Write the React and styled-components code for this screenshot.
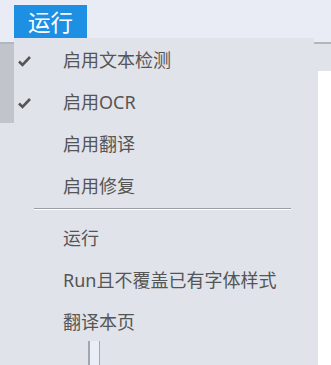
import React from 'react';
import styled, { createGlobalStyle } from 'styled-components';

const GlobalStyle = createGlobalStyle`
    html, body {
        margin: 0;
        padding: 0;
        background: #e0e3ea;
        font-family: "Noto Sans", "Noto Sans CJK SC", sans-serif;
        overflow: hidden;
    }
`;

const Page = styled.div`
    position: relative;
    width: 331px;
    height: 365px;
    overflow: hidden;
`;

const TopBar = styled.div`
    height: 44px;
    background: #e9ecf4;
    border-bottom: 2px solid #b3b6bd;
    box-sizing: border-box;
    padding: 5px 0 0 14px;
`;

const RunButton = styled.div`
    display: inline-flex;
    align-items: center;
    height: 33px;
    padding: 0 14px;
    background: #1d90e4;
    color: #fff;
    font-family: "Noto Sans CJK SC", sans-serif;
    font-size: 22.5px;
    line-height: 1;
`;

const Workspace = styled.div`
    display: flex;
    height: 321px;
`;

const LeftRail = styled.div`
    width: 14px;
    display: flex;
    flex-direction: column;
`;

const Thumb = styled.div`
    height: 79px;
    background: #c1c4ca;
`;

const Middle = styled.div`
    flex: 1;
`;

const RightPane = styled.div`
    width: 13px;
    padding-top: 27px;
    display: flex;
    flex-direction: column;
`;

const WhiteArea = styled.div`
    flex: 1;
    background: #fff;
`;

const Menu = styled.div`
    position: absolute;
    left: 14px;
    top: 38px;
    width: 300px;
    height: 340px;
    background: #e0e3ea;
`;

const Item = styled.div`
    display: flex;
    align-items: center;
    height: 42px;
    color: #555;
    font-size: 18px;
    font-family: "Noto Sans", "Noto Sans CJK SC", sans-serif;
`;

const CheckSlot = styled.div`
    width: 49px;
    padding: 3px 0 0 4px;
    box-sizing: border-box;
    display: flex;
    align-items: center;
`;

const Separator = styled.div`
    margin: 2px 23px 6px 20px;
    height: 1px;
    background: #9a9da3;
    border-bottom: 1px solid #fff;
`;

const Stub = styled.div`
    position: absolute;
    left: 74px;
    top: 303px;
    width: 9px;
    height: 30px;
    background: #e9edf6;
    border-left: 2px solid #a2a6ae;
    border-right: 1px solid #a2a6ae;
`;

const Check = () => (
    <svg width="13" height="12" viewBox="0 0 13 12">
        <path d="M1 6.5 L4.5 10 L12 2" fill="none" stroke="#555" strokeWidth="2.6" strokeLinejoin="miter" />
    </svg>
);

const items = [
    { label: '启用文本检测', checked: true },
    { label: '启用OCR', checked: true },
    { label: '启用翻译' },
    { label: '启用修复' },
];

const actions = ['运行', 'Run且不覆盖已有字体样式', '翻译本页'];

export default function App() {
    return (
        <Page>
            <GlobalStyle />
            <TopBar>
                <RunButton>运行</RunButton>
            </TopBar>
            <Workspace>
                <LeftRail>
                    <Thumb />
                </LeftRail>
                <Middle />
                <RightPane>
                    <WhiteArea />
                </RightPane>
            </Workspace>
            <Menu>
                {items.map(it => (
                    <Item key={it.label}>
                        <CheckSlot>{it.checked && <Check />}</CheckSlot>
                        {it.label}
                    </Item>
                ))}
                <Separator />
                {actions.map(a => (
                    <Item key={a}>
                        <CheckSlot />
                        {a}
                    </Item>
                ))}
                <Stub />
            </Menu>
        </Page>
    );
}
